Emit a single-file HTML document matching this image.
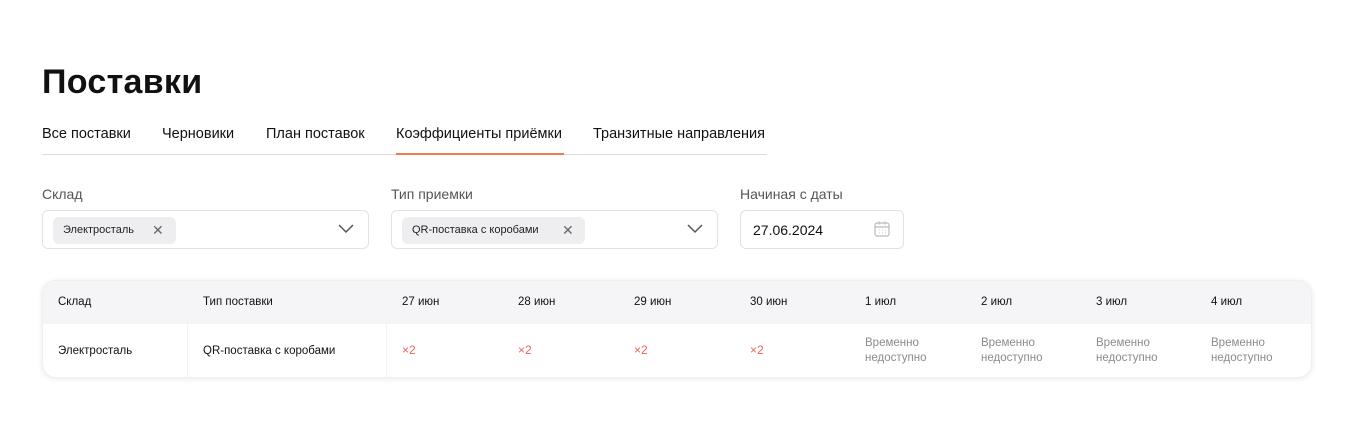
<!DOCTYPE html>
<html><head><meta charset="utf-8"><style>
*{box-sizing:border-box;margin:0;padding:0}
body{width:1360px;height:445px;background:#fff;font-family:"Liberation Sans","DejaVu Sans",sans-serif;color:#111;position:relative;overflow:hidden}
.abs{position:absolute;white-space:nowrap}
h1{position:absolute;left:42px;top:63px;font-size:34px;font-weight:bold;letter-spacing:0.3px}
.tab{position:absolute;top:126px;font-size:14.5px;color:#111}
.lbl{position:absolute;top:186px;font-size:14px;color:#555}
.inp{position:absolute;top:210px;height:39px;border:1px solid #e2e2e6;border-radius:6px;background:#fff}
.chip{position:absolute;left:10px;top:6px;height:27px;border-radius:6px;background:#eeeef1;font-size:11px;padding:7px 0 0 10px;color:#222}
.chip span{position:absolute;top:5px;font-size:14px;color:#666}
.chev{position:absolute;right:14px;top:13px}
.tbl{position:absolute;left:42px;top:280px;width:1270px;height:98px;border-radius:14px;box-shadow:0 1px 6px rgba(0,0,0,0.09);border:1px solid #efeff2;overflow:hidden;background:#fff}
.hd{position:absolute;left:0;top:0;width:100%;height:43px;background:#f5f5f7}
.c{position:absolute;font-size:11.5px;white-space:nowrap}
.r{color:#f0625e;font-size:12px}
.g{color:#8a8a90;font-size:11.5px;line-height:15px}
</style></head><body>
<h1>Поставки</h1>
<div class="tab" style="left:42px">Все поставки</div>
<div class="tab" style="left:162px">Черновики</div>
<div class="tab" style="left:266px">План поставок</div>
<div class="tab" style="left:396px">Коэффициенты приёмки</div>
<div class="tab" style="left:593px">Транзитные направления</div>
<div class="abs" style="left:42px;top:154px;width:725px;height:1px;background:#dcdce0"></div>
<div class="abs" style="left:396px;top:153px;width:168px;height:2px;background:#f47a4a"></div>

<div class="lbl" style="left:42px">Склад</div>
<div class="lbl" style="left:391px">Тип приемки</div>
<div class="lbl" style="left:740px">Начиная с даты</div>

<div class="inp" style="left:42px;width:327px">
 <div class="chip" style="width:123px">Электросталь<span style="left:99px">✕</span></div>
 <svg class="chev" width="16" height="10" viewBox="0 0 16 10"><path d="M1 1l7 7 7-7" fill="none" stroke="#555" stroke-width="1.5"/></svg>
</div>
<div class="inp" style="left:391px;width:327px">
 <div class="chip" style="width:183px">QR-поставка с коробами<span style="left:160px">✕</span></div>
 <svg class="chev" width="16" height="10" viewBox="0 0 16 10"><path d="M1 1l7 7 7-7" fill="none" stroke="#555" stroke-width="1.5"/></svg>
</div>
<div class="inp" style="left:740px;width:164px">
 <div class="abs" style="left:12px;top:11px;font-size:14px;color:#111">27.06.2024</div>
 <svg class="abs" style="left:132px;top:9px" width="18" height="18" viewBox="0 0 18 18"><rect x="2" y="3" width="14" height="13" rx="2" fill="none" stroke="#bbb" stroke-width="1.2"/><path d="M2 7h14M6 1.5v3M12 1.5v3" stroke="#bbb" stroke-width="1.2"/><path d="M6 10h1M9 10h1M12 10h1M6 13h1M9 13h1M12 13h1" stroke="#ccc" stroke-width="1"/></svg>
</div>

<div class="tbl">
 <div class="hd"></div>
 <div class="abs" style="left:144px;top:43px;width:1px;height:55px;background:#f3f3f5"></div>
 <div class="abs" style="left:343px;top:43px;width:1px;height:55px;background:#f3f3f5"></div>
 <div class="c" style="left:15px;top:15px">Склад</div>
 <div class="c" style="left:160px;top:15px">Тип поставки</div>
 <div class="c" style="left:359px;top:15px">27 июн</div>
 <div class="c" style="left:475px;top:15px">28 июн</div>
 <div class="c" style="left:591px;top:15px">29 июн</div>
 <div class="c" style="left:707px;top:15px">30 июн</div>
 <div class="c" style="left:822px;top:15px">1 июл</div>
 <div class="c" style="left:938px;top:15px">2 июл</div>
 <div class="c" style="left:1053px;top:15px">3 июл</div>
 <div class="c" style="left:1168px;top:15px">4 июл</div>
 <div class="c" style="left:15px;top:64px">Электросталь</div>
 <div class="c" style="left:160px;top:64px">QR-поставка с коробами</div>
 <div class="c r" style="left:359px;top:62px">×2</div>
 <div class="c r" style="left:475px;top:62px">×2</div>
 <div class="c r" style="left:591px;top:62px">×2</div>
 <div class="c r" style="left:707px;top:62px">×2</div>
 <div class="c g" style="left:822px;top:55px">Временно<br>недоступно</div>
 <div class="c g" style="left:938px;top:55px">Временно<br>недоступно</div>
 <div class="c g" style="left:1053px;top:55px">Временно<br>недоступно</div>
 <div class="c g" style="left:1168px;top:55px">Временно<br>недоступно</div>
</div>
</body></html>
